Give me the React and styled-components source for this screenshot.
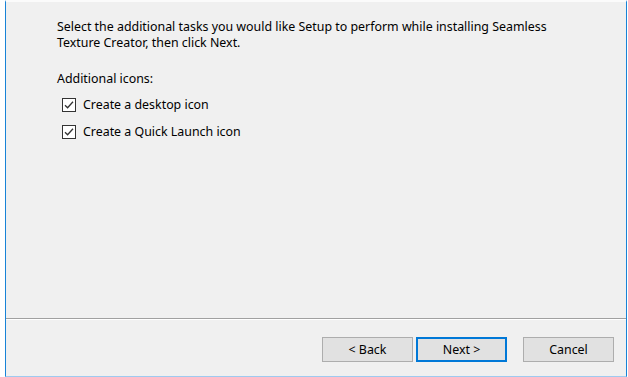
import React from "react";
import styled, { createGlobalStyle } from "styled-components";

const GlobalStyle = createGlobalStyle`
  html, body {
    margin: 0;
    padding: 0;
    background: #ffffff;
  }
  body {
    font-family: "Noto Sans", "Open Sans", sans-serif;
    font-size: 12.4px;
    color: #000000;
  }
`;

const Wizard = styled.div`
  box-sizing: border-box;
  width: 622px;
  height: 377px;
  margin-left: 5px;
  display: flex;
  flex-direction: column;
  background: #f0f0f0;
  border-left: 1px solid #1883d7;
  border-right: 1px solid #1883d7;
  border-bottom: 1px solid #9fcaf0;
  border-top: 2px solid #fbfbfb;
`;

const Body = styled.div`
  flex: 1;
  padding: 17px 0 0 51px;
`;

const Intro = styled.p`
  margin: 0;
  line-height: 16px;
`;

const GroupLabel = styled.p`
  margin: 20px 0 0;
  line-height: 16px;
`;

const TaskList = styled.div`
  display: flex;
  flex-direction: column;
  gap: 11px;
  margin-top: 10px;
  padding-left: 5px;
`;

const Task = styled.label`
  display: flex;
  align-items: center;
  gap: 7px;
  line-height: 16px;
`;

const Box = styled.span`
  box-sizing: border-box;
  width: 14px;
  height: 14px;
  border: 1px solid #333333;
  background: #ffffff;
  display: flex;
  align-items: center;
  justify-content: center;
`;

const Separator = styled.div`
  height: 1px;
  background: #a0a0a0;
  border-bottom: 1px solid #ffffff;
`;

const Footer = styled.div`
  height: 56px;
  display: flex;
  align-items: flex-start;
  justify-content: flex-end;
  padding: 17px 12px 0 0;
  box-sizing: border-box;
`;

const Button = styled.button`
  box-sizing: border-box;
  width: 91px;
  height: 25px;
  margin-left: ${p => p.$gap}px;
  font-family: "Noto Sans", "Open Sans", sans-serif;
  font-size: 12.4px;
  color: #000000;
  background: #e1e1e1;
  border: 1px solid #adadad;
  box-shadow: ${p => (p.$primary ? "inset 0 0 0 1px #0078d7" : "none")};
  border-color: ${p => (p.$primary ? "#0078d7" : "#adadad")};
  padding: 0;
`;

const Check = () => (
  <svg width="12" height="12" viewBox="0 0 12 12">
    <path d="M2 6.2 L4.6 8.8 L10 2.8" fill="none" stroke="#333333" strokeWidth="1.3" />
  </svg>
);

const tasks = ["Create a desktop icon", "Create a Quick Launch icon"];

export default function App() {
  return (
    <>
      <GlobalStyle />
      <Wizard>
        <Body>
          <Intro>
            Select the additional tasks you would like Setup to perform while installing Seamless
            <br />
            Texture Creator, then click Next.
          </Intro>
          <GroupLabel>Additional icons:</GroupLabel>
          <TaskList>
            {tasks.map(t => (
              <Task key={t}>
                <Box>
                  <Check />
                </Box>
                {t}
              </Task>
            ))}
          </TaskList>
        </Body>
        <Separator />
        <Footer>
          <Button $gap={0}>&lt; Back</Button>
          <Button $gap={3} $primary>
            Next &gt;
          </Button>
          <Button $gap={16}>Cancel</Button>
        </Footer>
      </Wizard>
    </>
  );
}
